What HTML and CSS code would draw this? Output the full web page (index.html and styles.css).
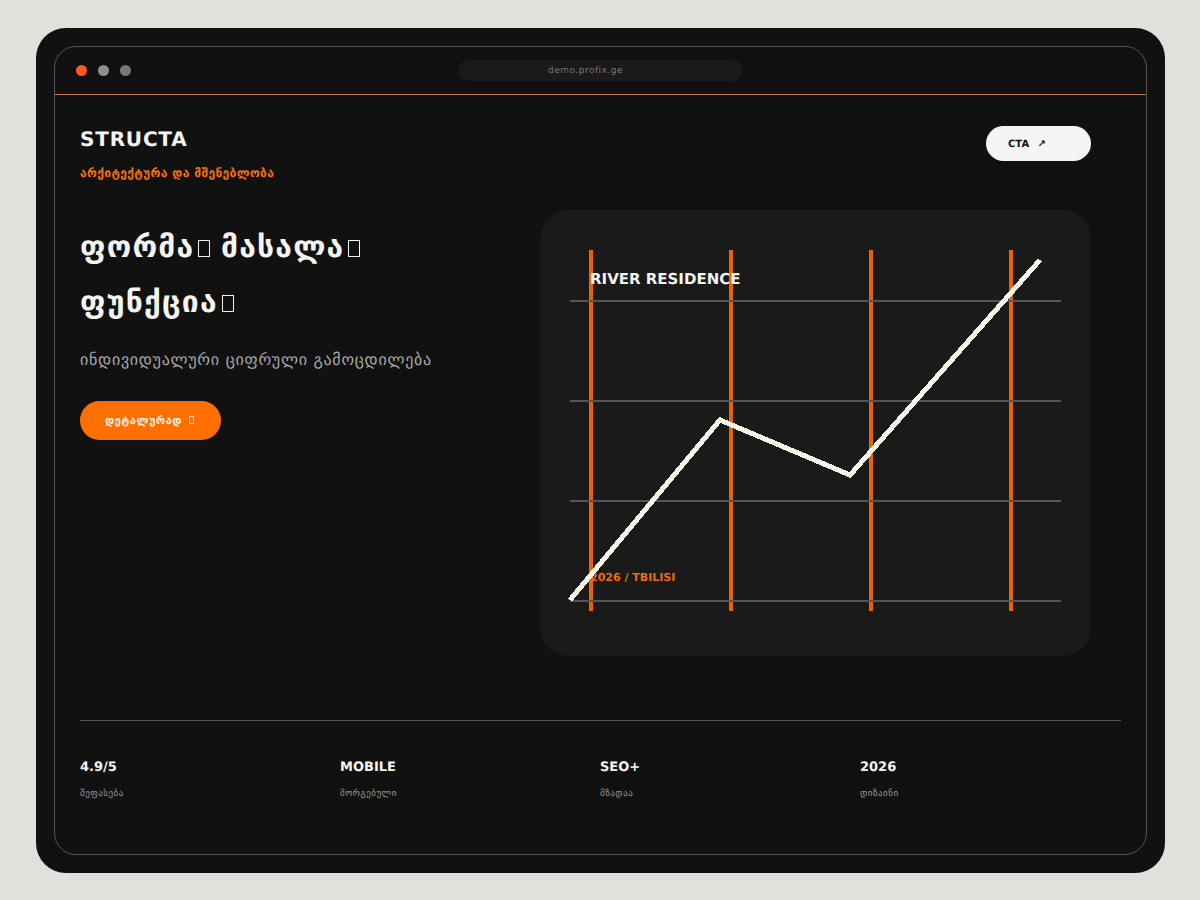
FILE: index.html
```html
<!DOCTYPE html>
<html lang="ka">
<head>
    <meta charset="UTF-8">
    <meta name="viewport" content="width=device-width, initial-scale=1.0">
    <title>STRUCTA</title>
    <link rel="stylesheet" href="styles.css">
</head>
<body>
    <div class="device">
        <div class="window">
            <div class="topbar">
                <div class="dots">
                    <span class="dot dot-active"></span>
                    <span class="dot dot-mid"></span>
                    <span class="dot dot-dim"></span>
                </div>
                <div class="address">demo.profix.ge</div>
            </div>

            <div class="content">
                <div class="header">
                    <div>
                        <div class="brand">STRUCTA</div>
                        <div class="tagline">არქიტექტურა და მშენებლობა</div>
                    </div>
                    <a class="cta" href="#">CTA <span class="cta-arrow">↗</span></a>
                </div>

                <div class="hero">
                    <div class="hero-text">
                        <h1>ფორმა<span class="tofu"></span> მასალა<span class="tofu"></span> ფუნქცია<span class="tofu"></span></h1>
                        <p>ინდივიდუალური ციფრული გამოცდილება</p>
                        <a class="btn" href="#">დეტალურად <span class="btn-icon"></span></a>
                    </div>
                    <div class="panel">
                        <svg class="chart" width="551" height="446" viewBox="0 0 551 446">
                            <g class="chart-columns">
                                <line x1="51" y1="40" x2="51" y2="401"></line>
                                <line x1="191" y1="40" x2="191" y2="401"></line>
                                <line x1="331" y1="40" x2="331" y2="401"></line>
                                <line x1="471" y1="40" x2="471" y2="401"></line>
                            </g>
                            <g class="chart-rows">
                                <line x1="30" y1="91" x2="521" y2="91"></line>
                                <line x1="30" y1="191" x2="521" y2="191"></line>
                                <line x1="30" y1="291" x2="521" y2="291"></line>
                                <line x1="30" y1="391" x2="521" y2="391"></line>
                            </g>
                            <text class="chart-title" x="50" y="74">RIVER RESIDENCE</text>
                            <text class="chart-place" x="50" y="371">2026 / TBILISI</text>
                            <polyline class="chart-line" points="30,390 180,210 310,265 500,50"></polyline>
                        </svg>
                    </div>
                </div>

                <div class="stats">
                    <div class="stat">
                        <div class="stat-value">4.9/5</div>
                        <div class="stat-label">შეფასება</div>
                    </div>
                    <div class="stat">
                        <div class="stat-value">MOBILE</div>
                        <div class="stat-label">მორგებული</div>
                    </div>
                    <div class="stat">
                        <div class="stat-value">SEO+</div>
                        <div class="stat-label">მზადაა</div>
                    </div>
                    <div class="stat">
                        <div class="stat-value">2026</div>
                        <div class="stat-label">დიზაინი</div>
                    </div>
                </div>
            </div>
        </div>
    </div>
</body>
</html>
```

FILE: styles.css
```css
* {
    margin: 0;
    padding: 0;
    box-sizing: border-box;
}

:root {
    --page: #e0e0dc;
    --frame: #111111;
    --surface: #1a1a1a;
    --orange: #ff6f00;
    --white: #f5f5f0;
    --line: #555555;
    --muted: #aaaaaa;
}

body {
    font-family: "DejaVu Sans", sans-serif;
    text-rendering: geometricPrecision;
    background-color: var(--page);
    color: var(--white);
    height: 900px;
    overflow: hidden;
    padding: 28px 35px 27px 36px;
}

a {
    text-decoration: none;
}

.device {
    height: 845px;
    background: var(--frame);
    border-radius: 30px;
    padding: 18px;
}

.window {
    height: 100%;
    border: 1px solid var(--line);
    border-radius: 22px;
}

.topbar {
    height: 48px;
    border-bottom: 1px solid #d0763a;
    display: flex;
    align-items: center;
    position: relative;
    padding: 0 21px;
}

.dots {
    display: flex;
    gap: 11px;
}

.dot {
    width: 11px;
    height: 11px;
    border-radius: 50%;
}

.dot-active {
    background: #ff5a1f;
}

.dot-mid {
    background: #8f8f8f;
}

.dot-dim {
    background: #777777;
}

.address {
    position: absolute;
    left: 403px;
    top: 13px;
    width: 285px;
    height: 21px;
    border-radius: 11px;
    background: var(--surface);
    color: #777777;
    font-size: 9px;
    letter-spacing: 0.5px;
    line-height: 23px;
    text-align: center;
    padding-right: 30px;
}

.content {
    padding: 31px 25px 0;
}

.header {
    display: flex;
    justify-content: space-between;
    align-items: flex-start;
    padding-right: 30px;
    height: 84px;
}

.brand {
    font-size: 20px;
    font-weight: 700;
    letter-spacing: 0.8px;
    line-height: 26px;
}

.tagline {
    font-size: 12px;
    font-weight: 700;
    letter-spacing: 0.36px;
    color: #f57005;
    margin-top: 13px;
    line-height: 16px;
}

.cta {
    width: 105px;
    height: 35px;
    border-radius: 18px;
    background: #f5f5f5;
    color: #111111;
    font-size: 10px;
    font-weight: 700;
    line-height: 37px;
    padding-left: 22px;
}

.cta-arrow {
    margin-left: 5px;
}

.hero {
    display: flex;
    justify-content: space-between;
    padding-right: 30px;
    height: 510px;
}

.hero-text h1 {
    font-size: 30px;
    font-weight: 700;
    letter-spacing: 1.2px;
    line-height: 55px;
    width: 400px;
    margin-top: 10px;
}

/* missing glyph boxes, same as the source page shows them */
.tofu {
    display: inline-block;
    width: 12px;
    height: 17px;
    margin: 0 -1px 0 4px;
    border: 1px solid var(--white);
}

.hero-text p {
    font-size: 16px;
    letter-spacing: 0.72px;
    color: var(--muted);
    line-height: 24px;
    margin-top: 18px;
}

.btn {
    display: inline-block;
    height: 39px;
    width: 141px;
    margin-top: 29px;
    border-radius: 20px;
    background: var(--orange);
    color: var(--white);
    font-size: 11px;
    letter-spacing: 0.6px;
    font-weight: 700;
    line-height: 39px;
    padding-left: 25px;
}

.btn-icon {
    display: inline-block;
    width: 5px;
    height: 8px;
    margin-left: 2px;
    border: 1px solid #ffd9b0;
}

.panel {
    width: 551px;
    height: 446px;
    background: var(--surface);
    border-radius: 28px;
}

.chart {
    display: block;
}

.chart-columns line {
    stroke: var(--orange);
    stroke-width: 4;
    opacity: 0.9;
}

.chart-rows line {
    stroke: var(--line);
    stroke-width: 2;
}

.chart-line {
    fill: none;
    stroke: #f5f5e8;
    stroke-width: 5;
    shape-rendering: crispEdges;
}

.chart-title {
    fill: var(--white);
    font-size: 15px;
    font-weight: 700;
}

.chart-place {
    fill: #ea6c10;
    font-size: 11px;
    font-weight: 700;
}

.stats {
    display: grid;
    grid-template-columns: repeat(4, 260px);
    border-top: 1px solid var(--line);
    padding-top: 39px;
}

.stat-value {
    font-size: 13px;
    font-weight: 700;
    line-height: 16px;
}

.stat-label {
    font-size: 9px;
    letter-spacing: 0.5px;
    color: #999999;
    line-height: 12px;
    margin-top: 12px;
}
```
